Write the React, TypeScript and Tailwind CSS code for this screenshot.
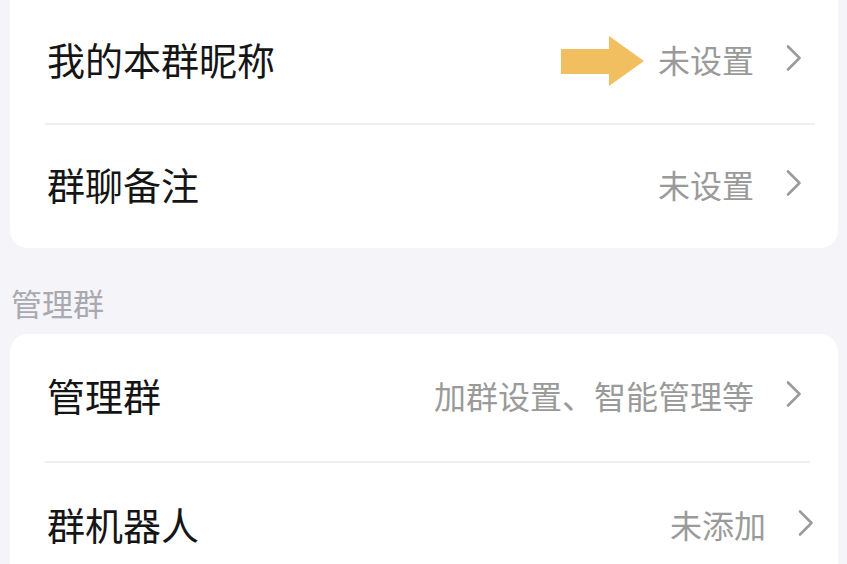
import React from "react";

const font = { fontFamily: '"Noto Sans CJK SC", "Noto Sans", sans-serif' };

function Chevron() {
  return (
    <svg width="18" height="28" viewBox="0 0 18 28" className="shrink-0">
      <path d="M3 2.5 L14.5 14 L3 25.5" fill="none" stroke="#9b9b9b" strokeWidth="2.6" strokeLinecap="round" strokeLinejoin="round" />
    </svg>
  );
}

function Arrow() {
  return (
    <svg width="84" height="52" viewBox="0 0 84 52" className="shrink-0">
      <polygon points="0,13 48,13 48,0 83,25 48,50 48,38 0,38" fill="#f2bf60" />
    </svg>
  );
}

function Row({ title, value, h, arrow, pr = "pr-[35px]" }: { title: string; value: string; h: string; arrow?: boolean; pr?: string }) {
  return (
    <div className={`flex items-center justify-between pl-[37px] ${pr} ${h}`}>
      <span className="text-[38px] leading-none text-[#151515] pb-[6px]">{title}</span>
      <div className="flex items-center">
        {arrow && <div className="mr-[13px]"><Arrow /></div>}
        <span className="text-[32px] leading-none text-[#9a9a9a] pb-[6px]">{value}</span>
        <div className="ml-[31px] pb-[8px]"><Chevron /></div>
      </div>
    </div>
  );
}

export default function App() {
  return (
    <div className="w-[847px] h-[564px] overflow-hidden bg-[#f4f4f9]" style={font}>
      <div className="ml-[10px] mr-[9px] bg-white rounded-b-[18px]">
        <Row title="我的本群昵称" value="未设置" h="h-[123px]" arrow />
        <div className="ml-[35px] mr-[23px] h-[2px] bg-[#efeff1]" />
        <Row title="群聊备注" value="未设置" h="h-[123px]" />
      </div>
      <div className="h-[86px] flex items-end pb-[15px] pl-[11px]">
        <span className="text-[31px] leading-[32px] text-[#a9a9b0]">管理群</span>
      </div>
      <div className="ml-[10px] mr-[9px] bg-white rounded-[18px]">
        <Row title="管理群" value="加群设置、智能管理等" h="h-[127px]" />
        <div className="ml-[35px] mr-[28px] h-[2px] bg-[#efeff1]" />
        <Row title="群机器人" value="未添加" h="h-[128px]" pr="pr-[23px]" />
      </div>
    </div>
  );
}
